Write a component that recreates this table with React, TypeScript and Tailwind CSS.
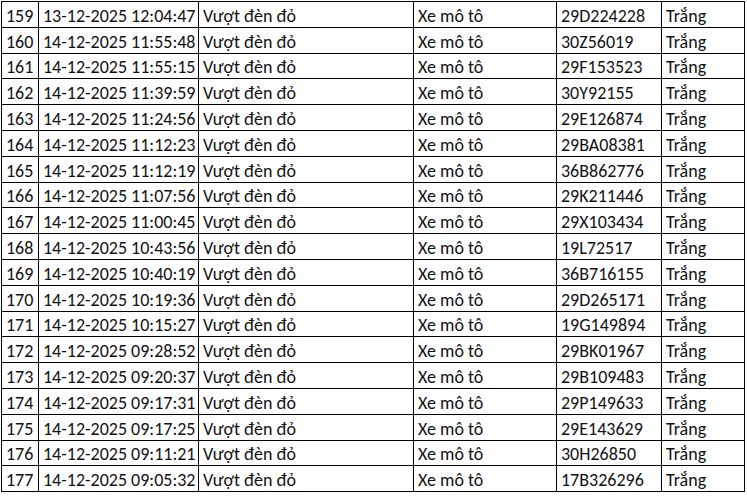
const rows: [string, string, string][] = [
  ["159", "13-12-2025 12:04:47", "29D224228"],
  ["160", "14-12-2025 11:55:48", "30Z56019"],
  ["161", "14-12-2025 11:55:15", "29F153523"],
  ["162", "14-12-2025 11:39:59", "30Y92155"],
  ["163", "14-12-2025 11:24:56", "29E126874"],
  ["164", "14-12-2025 11:12:23", "29BA08381"],
  ["165", "14-12-2025 11:12:19", "36B862776"],
  ["166", "14-12-2025 11:07:56", "29K211446"],
  ["167", "14-12-2025 11:00:45", "29X103434"],
  ["168", "14-12-2025 10:43:56", "19L72517"],
  ["169", "14-12-2025 10:40:19", "36B716155"],
  ["170", "14-12-2025 10:19:36", "29D265171"],
  ["171", "14-12-2025 10:15:27", "19G149894"],
  ["172", "14-12-2025 09:28:52", "29BK01967"],
  ["173", "14-12-2025 09:20:37", "29B109483"],
  ["174", "14-12-2025 09:17:31", "29P149633"],
  ["175", "14-12-2025 09:17:25", "29E143629"],
  ["176", "14-12-2025 09:11:21", "30H26850"],
  ["177", "14-12-2025 09:05:32", "17B326296"],
];

const cell = "flex items-center pl-[4px] pt-[3px] border-r border-black whitespace-nowrap overflow-hidden";

export default function App() {
  return (
    <div
      className="w-[747px] h-[498px] bg-white text-[#111] pt-px pl-px overflow-hidden"
      style={{ fontFamily: "Carlito, Calibri, 'Liberation Sans', sans-serif" }}
    >
      <div className="w-[744px] border-t border-l border-black text-[18px] leading-none">
        {rows.map(([no, time, plate]) => (
          <div
            key={no}
            className="grid grid-cols-[37px_160px_215px_143px_105px_83px] h-[25.8px] border-b border-black"
          >
            <div className={cell}>{no}</div>
            <div className={cell}>{time}</div>
            <div className={cell}>Vượt đèn đỏ</div>
            <div className={cell}>Xe mô tô</div>
            <div className={cell}>{plate}</div>
            <div className={cell}>Trắng</div>
          </div>
        ))}
      </div>
    </div>
  );
}
